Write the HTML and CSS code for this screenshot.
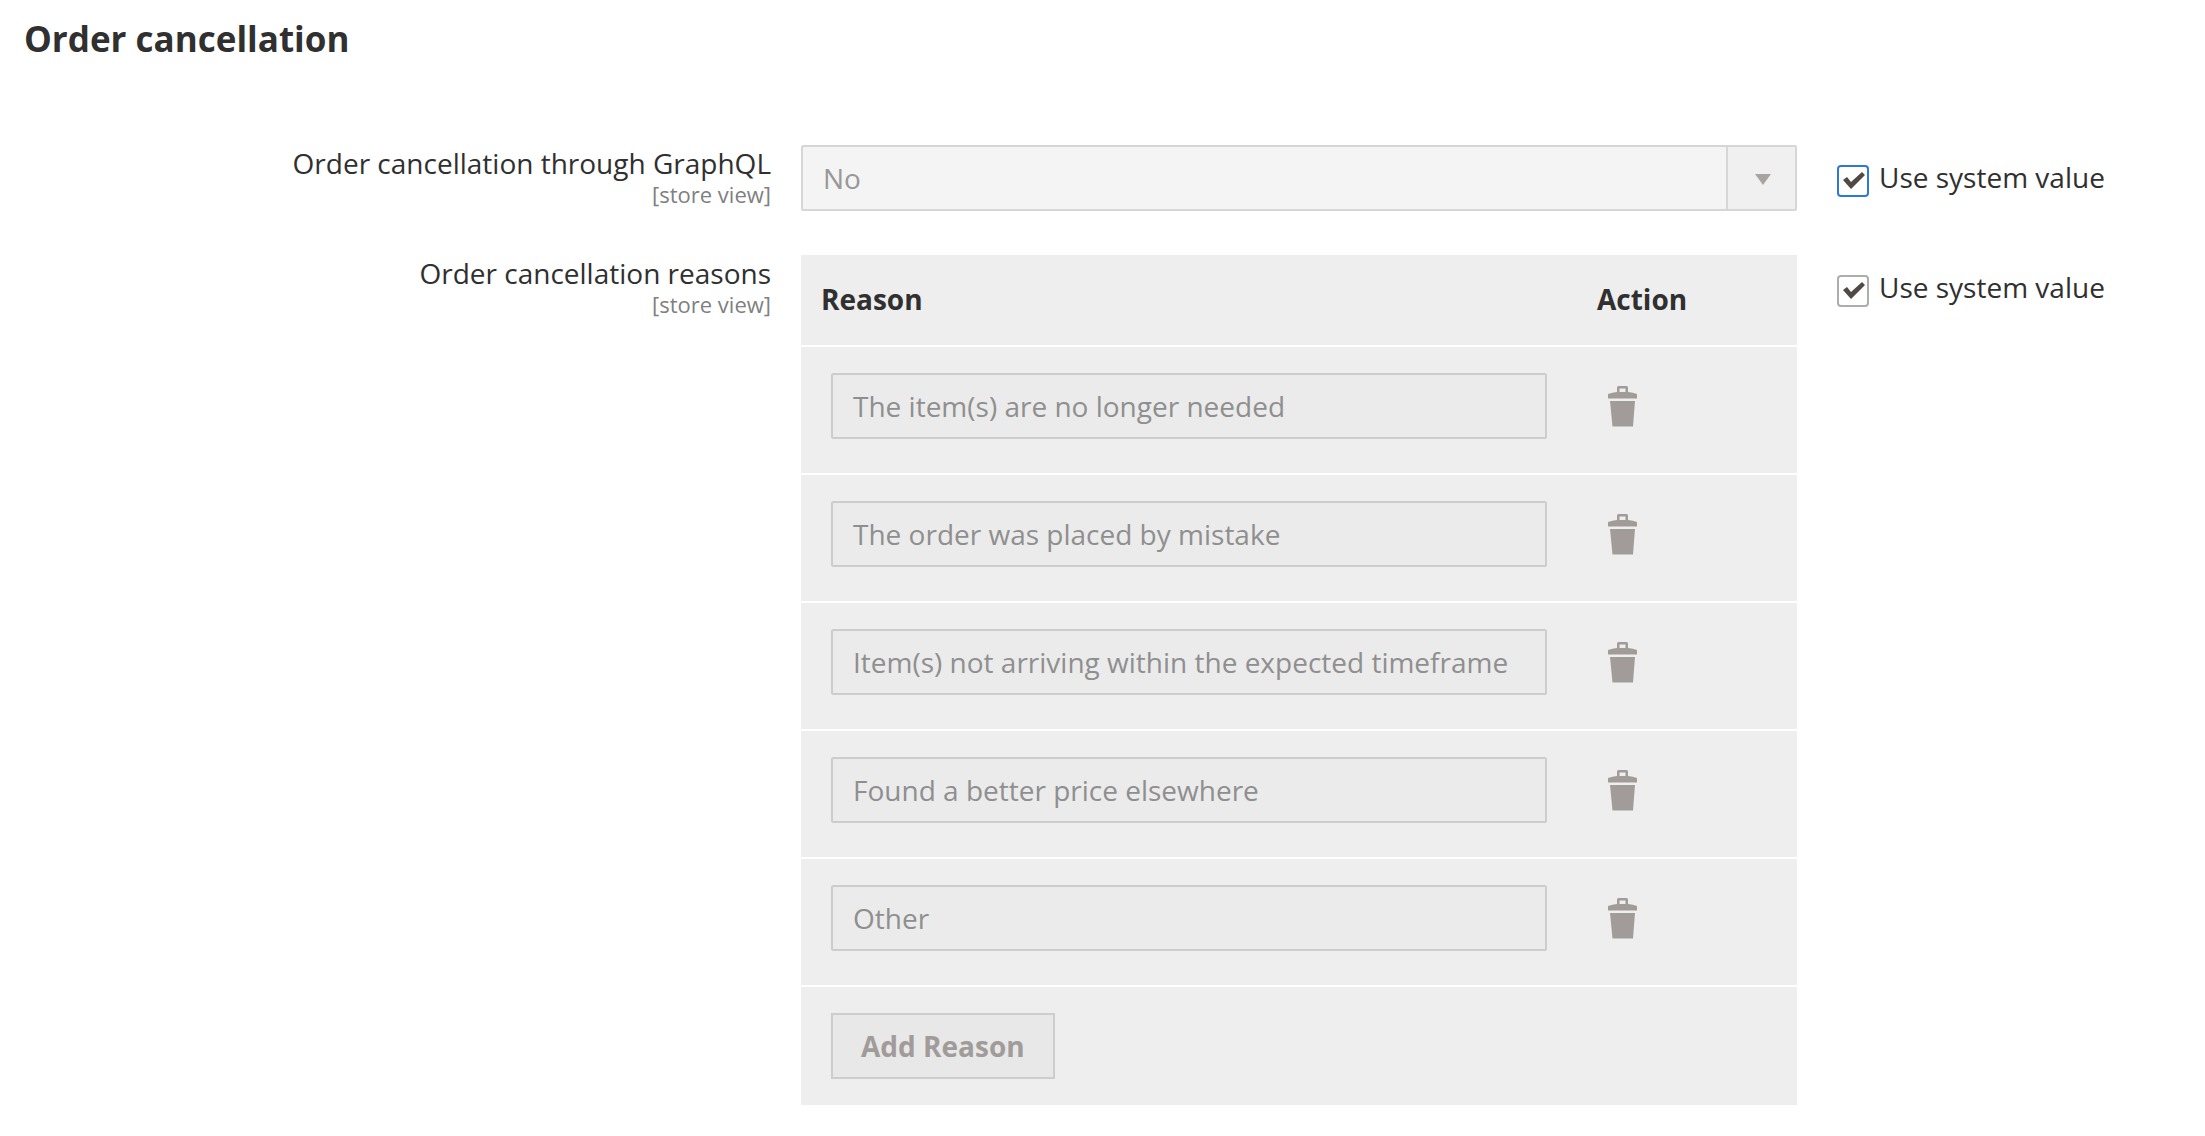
FILE: index.html
```html
<!DOCTYPE html>
<html lang="en">
<head>
<meta charset="utf-8">
<meta name="viewport" content="width=device-width, initial-scale=1">
<title>Order cancellation</title>
<link rel="stylesheet" href="styles.css">
</head>
<body>
<svg class="sprite" aria-hidden="true">
  <symbol id="trash" viewBox="0 0 30 42">
    <path fill-rule="evenodd" d="M10 7V2.500Q10 1 11.500 1H19.500Q21 1 21 2.500V7Q26 7.400 30 9V13.500H1V9Q5 7.400 10 7ZM12.500 7H18.500V3.500H12.500Z"/>
    <path d="M3 16H28L26 41.500H5.500Z"/>
  </symbol>
</svg>
<main class="section">
  <h1 class="title">Order cancellation</h1>
  <form class="fields">
    <div class="field">
      <label class="label" for="graphql">Order cancellation through GraphQL<span class="scope">[store view]</span></label>
      <div class="select-wrap">
        <select class="select" id="graphql" disabled><option>No</option></select>
      </div>
      <div class="inherit">
        <input class="check check-active" type="checkbox" id="inherit-graphql" checked>
        <label for="inherit-graphql">Use system value</label>
      </div>
    </div>
    <div class="field">
      <div class="label" id="reasons-label">Order cancellation reasons<span class="scope">[store view]</span></div>
      <table class="reasons" aria-labelledby="reasons-label">
        <thead>
          <tr><th>Reason</th><th class="action">Action</th></tr>
        </thead>
        <tbody>
          <tr><td><input class="text" type="text" aria-label="Reason 1" value="The item(s) are no longer needed" disabled></td><td><button class="delete" type="button" aria-label="Delete" disabled><svg><use href="#trash"/></svg></button></td></tr>
          <tr><td><input class="text" type="text" aria-label="Reason 2" value="The order was placed by mistake" disabled></td><td><button class="delete" type="button" aria-label="Delete" disabled><svg><use href="#trash"/></svg></button></td></tr>
          <tr><td><input class="text" type="text" aria-label="Reason 3" value="Item(s) not arriving within the expected timeframe" disabled></td><td><button class="delete" type="button" aria-label="Delete" disabled><svg><use href="#trash"/></svg></button></td></tr>
          <tr><td><input class="text" type="text" aria-label="Reason 4" value="Found a better price elsewhere" disabled></td><td><button class="delete" type="button" aria-label="Delete" disabled><svg><use href="#trash"/></svg></button></td></tr>
          <tr><td><input class="text" type="text" aria-label="Reason 5" value="Other" disabled></td><td><button class="delete" type="button" aria-label="Delete" disabled><svg><use href="#trash"/></svg></button></td></tr>
        </tbody>
        <tfoot>
          <tr><td colspan="2"><button class="add" type="button" disabled>Add Reason</button></td></tr>
        </tfoot>
      </table>
      <div class="inherit">
        <input class="check" type="checkbox" id="inherit-reasons" checked>
        <label for="inherit-reasons">Use system value</label>
      </div>
    </div>
  </form>
</main>
</body>
</html>
```
FILE: styles.css
```css
* { box-sizing: border-box; }

body {
  margin: 0;
  background: #fff;
  color: #303030;
  font: 28px/36px "Open Sans", "Noto Sans", sans-serif;
}

.sprite { display: none; }

.title {
  margin: 0;
  padding: 16px 24px 0;
  font-size: 35px;
  line-height: 46px;
  font-weight: 700;
}

.fields {
  display: flex;
  flex-direction: column;
  gap: 44px;
  padding-top: 83px;
}

.field {
  display: grid;
  grid-template-columns: minmax(0, 801fr) minmax(0, 996fr) minmax(0, 408fr);
  align-items: start;
}

.label {
  padding: 0 30px 0 24px;
  text-align: right;
}

.scope {
  display: block;
  color: #808080;
  font-size: 22px;
  line-height: 26px;
}

.select-wrap {
  position: relative;
}

.select-wrap::before {
  content: "";
  position: absolute;
  top: 2px;
  right: 2px;
  bottom: 2px;
  width: 67px;
  border-left: 2px solid #d6d6d6;
  background: #f0f0f0;
}

.select-wrap::after {
  content: "";
  position: absolute;
  top: 29px;
  right: 26px;
  width: 16px;
  height: 11px;
  background: #a9a4a1;
  clip-path: polygon(0 0, 100% 0, 50% 100%);
}

.select,
.text {
  display: block;
  width: 100%;
  height: 66px;
  margin: 0;
  padding: 0 20px;
  border: 2px solid #d6d6d6;
  border-radius: 2px;
  font: inherit;
  opacity: 1;
}

.select {
  appearance: none;
  background: #f4f4f4;
  color: #989898;
}

.text {
  border-color: #cdcdcd;
  background: #ebebeb;
  color: #8f8f8f;
}

.inherit {
  display: flex;
  align-items: flex-start;
  gap: 10px;
  padding: 14px 0 0 40px;
}

.check {
  appearance: none;
  flex: none;
  width: 32px;
  height: 32px;
  margin: 6px 0 0;
  border: 2px solid #adadad;
  border-radius: 4px;
  background: #fff;
}

.check-active { border-color: #2f78d7; }

.check:checked::before {
  content: "";
  display: block;
  width: 22px;
  height: 17px;
  margin: 5px 0 0 4px;
  background: #514943;
  clip-path: polygon(0 8px, 4px 5px, 8px 10px, 19px 0, 22px 3px, 8px 17px);
}

.reasons {
  width: 100%;
  table-layout: fixed;
  border-spacing: 0;
  background: #eee;
}

.reasons th {
  height: 90px;
  padding: 0 20px 2px;
  text-align: left;
  font-weight: 700;
}

.action { width: 220px; }

.reasons td {
  padding: 26px 30px 34px;
  border-top: 2px solid #fff;
}

.reasons tfoot td { padding-bottom: 26px; }

.delete {
  display: flex;
  align-items: center;
  height: 66px;
  padding: 0;
  border: 0;
  background: none;
  color: #a19c99;
}

.delete svg {
  width: 30px;
  height: 42px;
  fill: currentColor;
}

.add {
  display: block;
  height: 66px;
  padding: 0 28px;
  border: 2px solid #cdcdcd;
  background: #e8e8e8;
  color: #a19c99;
  font: inherit;
  font-weight: 700;
}
```
